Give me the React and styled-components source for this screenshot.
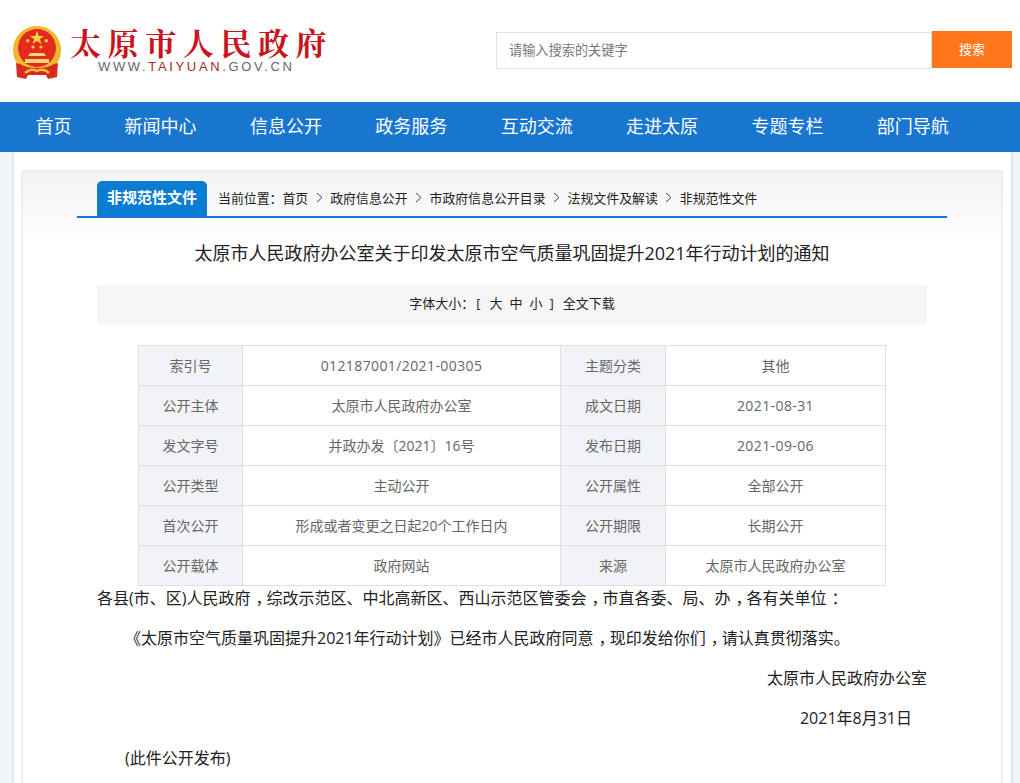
import React from "react";
import styled, { createGlobalStyle } from "styled-components";

const Global = createGlobalStyle`
  html, body { margin: 0; padding: 0; background: #fff; }
  body { font-family: "Open Sans", "Noto Sans CJK SC", sans-serif; overflow: hidden; }
`;
const Page = styled.div`width: 1020px; height: 783px; overflow: hidden; background: #f3f6f8;`;
const Top = styled.header`display: flex; height: 102px; background: #fff; box-sizing: border-box; padding: 0 8px 0 12px; align-items: flex-start;`;
const Logo = styled.div`display: flex; gap: 8px; padding-top: 26px; width: 484px;`;
const LogoText = styled.div`display: flex; flex-direction: column; align-items: flex-start; width: 262px;`;
const LogoTitle = styled.div`font: 700 31px/34px "Noto Serif CJK SC", "Noto Sans CJK SC", serif; color: #c8141c; letter-spacing: 6.6px; white-space: nowrap; margin-top: -1px;`;
const LogoUrl = styled.div`font: 13px/16px "Liberation Sans", sans-serif; color: #666; letter-spacing: 2.65px; margin: 0 0 0 28px; white-space: nowrap; b { color: #a6262c; font-weight: 400; }`;
const Search = styled.div`display: flex; margin-top: 31px;`;
const SearchInput = styled.div`width: 436px; height: 37px; box-sizing: border-box; border: 1px solid #e0e0e0; margin-top: 1px; font-size: 13.2px; line-height: 34px; color: #777; padding-left: 12px;`;
const SearchBtn = styled.div`width: 80px; height: 37px; background: #ff761b; color: #fff; font-size: 13px; line-height: 36px; text-align: center;`;
const Nav = styled.nav`height: 50px; background: #1976cf; display: flex; padding-left: 35.5px; gap: 53px;`;
const NavItem = styled.a`color: #fff; font-size: 18px; line-height: 49px; white-space: nowrap; width: 72.4px; &:first-child { width: 36px; }`;
const Body = styled.main`margin: 0 7px 0 12px; height: 631px; background: #fff; border-left: 2px solid #e4e6e8; border-right: 2px solid #e4e6e8; padding: 18px 8px 0 7px; box-sizing: border-box;`;
const Card = styled.section`border: 2px solid #eee; border-bottom: 0; height: 613px; background: linear-gradient(#f4f4f4, #fff 75px); padding: 9px 54px 0; box-sizing: border-box;`;
const TabRow = styled.div`display: flex; align-items: center; height: 37px; box-sizing: border-box; border-bottom: 2px solid #1976cf; padding-left: 20px;`;
const Tab = styled.div`width: 110px; height: 35px; background: #0a7dd3; border-radius: 5px 5px 0 0; color: #fff; font-weight: 700; font-size: 15px; line-height: 33px; text-align: center;`;
const Crumbs = styled.div`margin: -2px 0 0 11px; font-size: 12.9px; line-height: 20px; color: #222; display: flex; align-items: center; white-space: nowrap;`;
const Sep = styled.span`width: 22px; display: flex; justify-content: center;`;
const Title = styled.h1`margin: 23px 0 0; font-size: 18px; line-height: 24px; font-weight: 400; color: #222; text-align: center; white-space: nowrap;`;
const Tools = styled.div`margin: 20px 20px 0; height: 40px; background: #f6f6f6; font-size: 13px; line-height: 37px; color: #222; display: flex; justify-content: center; gap: 7px; white-space: nowrap;`;
const ToolPart = styled.span`margin-right: ${p => p.$after || 0}px;`;
const Table = styled.div`display: grid; grid-template-columns: 104px 318px 105px 220px; width: 748px; margin: 20px 0 0 61px; border-top: 1px solid #e0e0e0; border-left: 1px solid #e0e0e0;`;
const Cell = styled.div`height: 40px; box-sizing: border-box; border-right: 1px solid #e0e0e0; border-bottom: 1px solid #e0e0e0; font-size: 14px; line-height: 40px; text-align: center; color: #666; white-space: nowrap; letter-spacing: ${p => p.$numeric ? "0.4px" : "0"}; background: ${p => p.$head ? "#f2f3f7" : "#fff"};`;
const Para = styled.p`margin: 0; height: 40px; font-size: 16px; line-height: 24px; color: #222; padding: 0 ${p => p.$right ?? 20}px 0 20px; text-align: ${p => p.$align || "left"}; text-indent: ${p => p.$indent || 0}px; white-space: nowrap;`;
const Comma = styled.span`display: inline-block; text-indent: 0; transform: translateX(5px);`;

const rows = [
  ["索引号", "012187001/2021-00305", "主题分类", "其他"],
  ["公开主体", "太原市人民政府办公室", "成文日期", "2021-08-31"],
  ["发文字号", "并政办发〔2021〕16号", "发布日期", "2021-09-06"],
  ["公开类型", "主动公开", "公开属性", "全部公开"],
  ["首次公开", "形成或者变更之日起20个工作日内", "公开期限", "长期公开"],
  ["公开载体", "政府网站", "来源", "太原市人民政府办公室"],
];
const nav = ["首页", "新闻中心", "信息公开", "政务服务", "互动交流", "走进太原", "专题专栏", "部门导航"];
const crumbs = ["政府信息公开", "市政府信息公开目录", "法规文件及解读", "非规范性文件"];

const Chevron = () => (
  <svg width="7" height="11" viewBox="0 0 7 11"><path d="M1 1l5 4.5L1 10" fill="none" stroke="#444" strokeWidth="1" /></svg>
);

const Emblem = () => (
  <svg width="50" height="53" viewBox="0 0 50 53">
    <circle cx="25" cy="24" r="24" fill="#eeb82e" />
    <circle cx="25" cy="22" r="19" fill="#e4291f" />
    <polygon points="25,5 26.8,10 32,10 27.8,13.2 29.4,18 25,15 20.6,18 22.2,13.2 18,10 23.2,10" fill="#f8d23c" />
    <circle cx="15.7" cy="14.7" r="1.7" fill="#f8d23c" /><circle cx="34.3" cy="14.7" r="1.7" fill="#f8d23c" />
    <circle cx="21" cy="21" r="1.6" fill="#f8d23c" /><circle cx="29" cy="21" r="1.6" fill="#f8d23c" />
    <path d="M18 27h14l2 3H16z" fill="#f6d878" />
    <path d="M19 30h12v3H19z" fill="#e4291f" />
    <path d="M13 33h24v4H13z" fill="#f6d878" />
    <path d="M4 37l4 1c5 3 10 4 17 4s12-1 17-4l4-1-1 14-9 2-2-4H16l-2 4-9-2z" fill="#d92a20" />
    <path d="M13 47c4-4 9-4 12-2 3-2 8-2 12 2" stroke="#f2c03c" strokeWidth="2.5" fill="none" />
  </svg>
);

export default function App() {
  return (
    <Page>
      <Global />
      <Top>
        <Logo>
          <Emblem />
          <LogoText>
            <LogoTitle>太原市人民政府</LogoTitle>
            <LogoUrl>WWW.<b>TAIYUAN</b>.GOV.CN</LogoUrl>
          </LogoText>
        </Logo>
        <Search>
          <SearchInput>请输入搜索的关键字</SearchInput>
          <SearchBtn>搜索</SearchBtn>
        </Search>
      </Top>
      <Nav>{nav.map(n => <NavItem key={n}>{n}</NavItem>)}</Nav>
      <Body>
        <Card>
          <TabRow>
            <Tab>非规范性文件</Tab>
            <Crumbs>
              <span>当前位置：首页</span>
              {crumbs.map(c => (
                <React.Fragment key={c}><Sep><Chevron /></Sep><span>{c}</span></React.Fragment>
              ))}
            </Crumbs>
          </TabRow>
          <Title>太原市人民政府办公室关于印发太原市空气质量巩固提升2021年行动计划的通知</Title>
          <Tools>
            <ToolPart $after={-5}>字体大小：</ToolPart>
            <ToolPart $after={2}>[</ToolPart>
            <ToolPart>大</ToolPart>
            <ToolPart>中</ToolPart>
            <ToolPart>小</ToolPart>
            <ToolPart $after={2}>]</ToolPart>
            <ToolPart>全文下载</ToolPart>
          </Tools>
          <Table>
            {rows.flatMap((r, i) => r.map((c, j) => (
              <Cell key={i + "-" + j} $head={j % 2 === 0} $numeric={/^[\d/-]+$/.test(c)}>{c}</Cell>
            )))}
          </Table>
          <Para>各县(市、区)人民政府<Comma>，</Comma>综改示范区、中北高新区、西山示范区管委会<Comma>，</Comma>市直各委、局、办<Comma>，</Comma>各有关单位<Comma>：</Comma></Para>
          <Para $indent={28}>《太原市空气质量巩固提升2021年行动计划》已经市人民政府同意<Comma>，</Comma>现印发给你们<Comma>，</Comma>请认真贯彻落实。</Para>
          <Para $align="right">太原市人民政府办公室</Para>
          <Para $align="right" $right={35}>2021年8月31日</Para>
          <Para $indent={28}>(此件公开发布)</Para>
        </Card>
      </Body>
    </Page>
  );
}
